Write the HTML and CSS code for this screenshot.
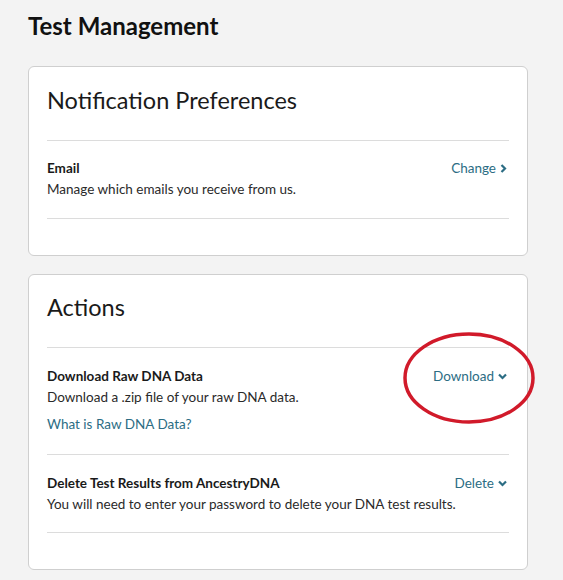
FILE: index.html
```html
<!DOCTYPE html>
<html lang="en">
<head>
<meta charset="utf-8">
<title>Test Management</title>
<link rel="stylesheet" href="styles.css">
</head>
<body>
<main class="page">
  <h1 class="page-title">Test Management</h1>

  <section class="card">
    <h2 class="card-title">Notification Preferences</h2>
    <div class="row">
      <div class="row-head">
        <div class="row-title">Email</div>
        <a class="action" href="#">Change
          <svg class="chev" width="7" height="9" viewBox="0 0 7 9"><path d="M1.5 1 L5 4.5 L1.5 8" fill="none" stroke="currentColor" stroke-width="2.2"/></svg>
        </a>
      </div>
      <div class="row-desc">Manage which emails you receive from us.</div>
    </div>
  </section>

  <section class="card">
    <h2 class="card-title">Actions</h2>
    <div class="row">
      <div class="row-head">
        <div class="row-title">Download Raw DNA Data</div>
        <a class="action" href="#">Download
          <svg class="chev" width="9" height="7" viewBox="0 0 9 7"><path d="M1 1.5 L4.5 5 L8 1.5" fill="none" stroke="currentColor" stroke-width="2.2"/></svg>
        </a>
      </div>
      <div class="row-desc">Download a .zip file of your raw DNA data.</div>
      <a class="row-link" href="#">What is Raw DNA Data?</a>
      <svg class="circle-mark" width="136" height="96" viewBox="0 0 136 96"><ellipse cx="68" cy="48" rx="64" ry="44" fill="none" stroke="#d11a2a" stroke-width="3.5"/></svg>
    </div>
    <div class="row">
      <div class="row-head">
        <div class="row-title">Delete Test Results from AncestryDNA</div>
        <a class="action" href="#">Delete
          <svg class="chev" width="9" height="7" viewBox="0 0 9 7"><path d="M1 1.5 L4.5 5 L8 1.5" fill="none" stroke="currentColor" stroke-width="2.2"/></svg>
        </a>
      </div>
      <div class="row-desc">You will need to enter your password to delete your DNA test results.</div>
    </div>
  </section>
</main>
</body>
</html>
```

FILE: styles.css
```css
* { box-sizing: border-box; }

body {
  margin: 0;
  background: #f3f3f3;
  font-family: Lato, "Liberation Sans", sans-serif;
  color: #1c1c1c;
}

.page {
  width: 500px;
  margin-left: 28px;
  padding-top: 12px;
}

.page-title {
  margin: 0 0 26px;
  font-size: 24px;
  line-height: 28px;
  font-weight: 700;
  color: #111;
}

.card {
  background: #fff;
  border: 1px solid #cfcfcf;
  border-radius: 6px;
  padding: 17.5px 18px 36px;
  margin-bottom: 18px;
}

.card-title {
  margin: 0 0 25px;
  font-size: 23.5px;
  line-height: 30px;
  font-weight: 400;
  color: #1a1a1a;
}

.row {
  position: relative;
  border-top: 1px solid #dcdcdc;
  border-bottom: 1px solid #dcdcdc;
  padding: 17.5px 0;
  font-size: 13.5px;
  line-height: 21px;
}

.row + .row { border-top: 0; }

.row-head {
  display: flex;
  justify-content: space-between;
  align-items: center;
  gap: 12px;
}

.row-title {
  font-weight: 700;
  color: #1a1a1a;
}

.row-desc { color: #2a2a2a; }

.row-link {
  display: block;
  margin-top: 6px;
  margin-bottom: 2px;
  color: #2c6d84;
  text-decoration: none;
}

.action {
  flex: 0 0 auto;
  display: flex;
  align-items: center;
  gap: 4px;
  color: #2c6d84;
  text-decoration: none;
  margin-right: 2px;
}

.chev { display: block; }

.circle-mark {
  position: absolute;
  right: -28px;
  top: -18px;
  pointer-events: none;
}
```
